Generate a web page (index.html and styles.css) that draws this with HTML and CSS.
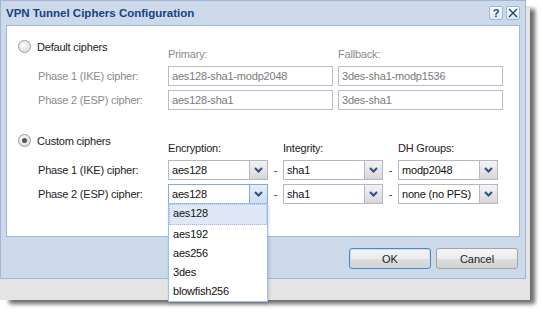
FILE: index.html
```html
<!DOCTYPE html>
<html lang="en">
<head>
    <meta charset="UTF-8" />
    <title>VPN Tunnel Ciphers Configuration</title>
    <link rel="stylesheet" href="styles.css">
</head>
<body>
    <div class="desk">
        <div class="shade"></div>
        <div class="backdrop"></div>

        <div class="win">
            <div class="win-head">
                <span class="win-title">VPN Tunnel Ciphers Configuration</span>
                <div class="tools">
                    <span class="tool help">?</span>
                    <span class="tool">
                        <svg width="10" height="10" viewBox="0 0 10 10">
                            <path d="M1 1 L9 9 M9 1 L1 9" stroke="#1d3f78" stroke-width="1.3" fill="none" />
                        </svg>
                    </span>
                </div>
            </div>

            <div class="win-body">
                <!-- default ciphers (disabled) -->
                <div class="group defaults">
                    <label class="radio"><span class="dot"></span>Default ciphers</label>
                    <span class="head">Primary:</span>
                    <span class="head">Fallback:</span>

                    <span class="lbl">Phase 1 (IKE) cipher:</span>
                    <div class="field">aes128-sha1-modp2048</div>
                    <div class="field">3des-sha1-modp1536</div>

                    <span class="lbl">Phase 2 (ESP) cipher:</span>
                    <div class="field">aes128-sha1</div>
                    <div class="field">3des-sha1</div>
                </div>

                <!-- custom ciphers -->
                <div class="group custom">
                    <label class="radio"><span class="dot on"></span>Custom ciphers</label>
                    <span class="head">Encryption:</span>
                    <span></span>
                    <span class="head">Integrity:</span>
                    <span></span>
                    <span class="head">DH Groups:</span>

                    <span class="lbl">Phase 1 (IKE) cipher:</span>
                    <div class="combo"><span class="combo-text">aes128</span><span class="trigger"><svg width="9" height="6" viewBox="0 0 9 6"><path d="M1 1 L4.5 4.5 L8 1" stroke="#2f4f86" stroke-width="2" fill="none" /></svg></span></div>
                    <span class="dash">-</span>
                    <div class="combo"><span class="combo-text">sha1</span><span class="trigger"><svg width="9" height="6" viewBox="0 0 9 6"><path d="M1 1 L4.5 4.5 L8 1" stroke="#2f4f86" stroke-width="2" fill="none" /></svg></span></div>
                    <span class="dash">-</span>
                    <div class="combo"><span class="combo-text">modp2048</span><span class="trigger"><svg width="9" height="6" viewBox="0 0 9 6"><path d="M1 1 L4.5 4.5 L8 1" stroke="#2f4f86" stroke-width="2" fill="none" /></svg></span></div>

                    <span class="lbl">Phase 2 (ESP) cipher:</span>
                    <div class="combo focus">
                        <span class="combo-text">aes128</span><span class="trigger"><svg width="9" height="6" viewBox="0 0 9 6"><path d="M1 1 L4.5 4.5 L8 1" stroke="#2f4f86" stroke-width="2" fill="none" /></svg></span>
                        <ul class="list">
                            <li class="sel">aes128</li>
                            <li>aes192</li>
                            <li>aes256</li>
                            <li>3des</li>
                            <li>blowfish256</li>
                        </ul>
                    </div>
                    <span class="dash">-</span>
                    <div class="combo"><span class="combo-text">sha1</span><span class="trigger"><svg width="9" height="6" viewBox="0 0 9 6"><path d="M1 1 L4.5 4.5 L8 1" stroke="#2f4f86" stroke-width="2" fill="none" /></svg></span></div>
                    <span class="dash">-</span>
                    <div class="combo"><span class="combo-text">none (no PFS)</span><span class="trigger"><svg width="9" height="6" viewBox="0 0 9 6"><path d="M1 1 L4.5 4.5 L8 1" stroke="#2f4f86" stroke-width="2" fill="none" /></svg></span></div>
                </div>
            </div>

            <div class="win-foot">
                <button class="btn default">OK</button>
                <button class="btn">Cancel</button>
            </div>
        </div>
    </div>
</body>
</html>
```

FILE: styles.css
```css
body {
    margin: 0;
    background: #fff;
    font-family: 'Liberation Sans', Arial, sans-serif;
    font-size: 11px;
    letter-spacing: -0.2px;
    color: #222;
}

.desk {
    position: relative;
    width: 543px;
    height: 315px;
}

.shade {
    position: absolute;
    left: 9px;
    top: 9px;
    width: 526px;
    height: 295px;
    background: #3a3a3a;
    opacity: 0.75;
    filter: blur(2px);
}

.backdrop {
    position: absolute;
    left: 0;
    top: 8px;
    width: 530px;
    height: 292px;
    background: #e4e4e4;
}

.win {
    position: absolute;
    left: 0;
    top: 0;
    width: 526px;
    height: 279px;
    box-sizing: border-box;
    background: #cdd9e8;
    border: 1px solid #9fb6d6;
    display: flex;
    flex-direction: column;
}

.win-head {
    height: 24px;
    display: flex;
    align-items: center;
    justify-content: space-between;
    padding: 0 5px 0 5px;
}

.win-title {
    font-weight: bold;
    font-size: 11.5px;
    letter-spacing: 0;
    color: #15428b;
}

.tools {
    display: flex;
    gap: 3px;
}

.tool {
    width: 14px;
    height: 14px;
    box-sizing: border-box;
    border: 1px solid #99bbe8;
    border-radius: 2px;
    background: linear-gradient(#ffffff, #dae6f5);
    display: flex;
    align-items: center;
    justify-content: center;
}

.tool.help {
    font-weight: bold;
    font-size: 11px;
    color: #1d3f78;
    line-height: 12px;
}

.win-body {
    height: 212px;
    box-sizing: border-box;
    margin: 0 5px;
    background: #fff;
    border: 1px solid #99bbe8;
    padding: 14px 0 0 11px;
}

.group {
    display: grid;
    grid-template-rows: 22px 20px 20px;
    row-gap: 4px;
    align-items: center;
}

.defaults {
    grid-template-columns: 145px 165px 165px;
    column-gap: 5px;
}

.custom {
    margin-top: 24px;
    grid-template-columns: 150px 100px 15px 100px 15px 100px;
}

.radio {
    align-self: start;
    height: 13px;
    display: flex;
    align-items: center;
    gap: 6px;
    color: #222;
}

.dot {
    width: 13px;
    height: 13px;
    box-sizing: border-box;
    border-radius: 50%;
    border: 1px solid #9c9c9c;
    background: radial-gradient(circle at 40% 35%, #fbfbfb, #d6d6d6);
    display: flex;
    align-items: center;
    justify-content: center;
}

.dot.on::after {
    content: "";
    width: 5px;
    height: 5px;
    border-radius: 50%;
    background: #555;
}

.head {
    align-self: end;
    line-height: 13px;
    padding-bottom: 1px;
}

.lbl {
    padding-left: 20px;
}

.defaults .head,
.defaults .lbl {
    color: #8a8a8a;
}

.field {
    height: 20px;
    box-sizing: border-box;
    border: 1px solid #b9bccb;
    padding: 0 3px;
    line-height: 18px;
    color: #7a7a7a;
}

.dash {
    text-align: center;
    color: #333;
}

.combo {
    position: relative;
    height: 20px;
    box-sizing: border-box;
    border: 1px solid #b5b8c8;
    display: flex;
}

.combo-text {
    flex: 1;
    padding: 0 3px;
    line-height: 18px;
    color: #111;
}

.trigger {
    width: 17px;
    border-left: 1px solid #b5b8c8;
    background: linear-gradient(#f3f3f3, #e3e3e3 60%, #d6d6d6);
    display: flex;
    align-items: center;
    justify-content: center;
}

.combo.focus {
    border-color: #7eadd9;
}

.combo.focus .trigger {
    border-left-color: #7eadd9;
    background: linear-gradient(#e4edf8, #cfdef0);
}

.list {
    position: absolute;
    left: -1px;
    top: 100%;
    z-index: 5;
    width: 100px;
    margin: 0;
    padding: 0;
    list-style: none;
    box-sizing: border-box;
    background: #fff;
    border: 1px solid #98c0f4;
    box-shadow: 1px 2px 3px rgba(0, 0, 0, 0.15);
}

.list li {
    height: 19px;
    line-height: 19px;
    padding-left: 4px;
    color: #111;
}

.list li.sel {
    line-height: 17px;
    background: #dfe8f6;
    border: 1px dotted #a3bae9;
    padding-left: 3px;
}

.win-foot {
    flex: 1;
    display: flex;
    justify-content: flex-end;
    align-items: flex-start;
    gap: 5px;
    padding: 11px 7px 0 0;
}

.btn {
    width: 82px;
    height: 21px;
    font-family: inherit;
    font-size: 11px;
    color: #222;
    border: 1px solid #a3a3a3;
    border-radius: 3px;
    background: linear-gradient(#f4f4f4, #ececec 50%, #dedede 51%, #d2d2d2);
    padding: 0;
}

.btn.default {
    border-color: #4d87c9;
    box-shadow: inset 0 0 0 1px #c5dcf3;
}
```
